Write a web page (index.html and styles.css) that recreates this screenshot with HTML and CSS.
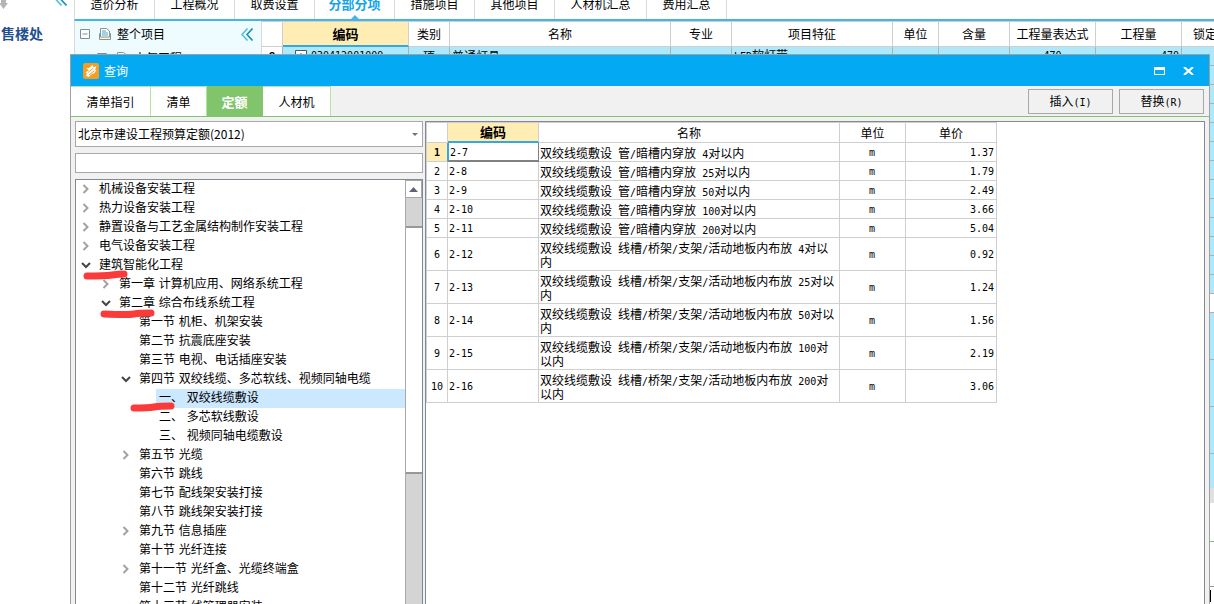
FILE: index.html
```html
<!DOCTYPE html>
<html lang="zh-CN">
<head>
<meta charset="utf-8">
<title>查询</title>
<link rel="stylesheet" href="styles.css">
</head>
<body>
<svg class="defs" aria-hidden="true">
  <symbol id="more" viewBox="0 0 10 10"><path d="M2.500 1L6.500 5L2.500 9" fill="none" stroke="#a2a2a2" stroke-width="2"/></symbol>
  <symbol id="open" viewBox="0 0 10 10"><path d="M1 3L5 7L9 3" fill="none" stroke="#454545" stroke-width="2"/></symbol>
  <symbol id="back" viewBox="0 0 12 13"><path d="M6.500 .5L1 6.500L6.500 12.500" fill="none" stroke="#4fc0d8" stroke-width="1.600"/><path d="M11.500 .5L6 6.500L11.500 12.500" fill="none" stroke="#1593b8" stroke-width="1.600"/></symbol>
</svg>

<div class="app">
  <aside class="project">
    <div class="project-top">
      <svg width="12" height="9" viewBox="0 0 12 9"><path d="M0 3h1V0h5v3h2L3.500 9L-1 3z" fill="#b5b5b5"/></svg>
      <svg width="12" height="13"><use href="#back"/></svg>
    </div>
    <div class="project-name">售楼处</div>
  </aside>
  <main class="work">
    <nav class="app-tabs">
      <button>造价分析</button><button>工程概况</button><button>取费设置</button><button class="on">分部分项</button><button>措施项目</button><button>其他项目</button><button class="wide">人材机汇总</button><button>费用汇总</button>
    </nav>
    <div class="split">
      <section class="outline">
        <div class="outline-row">
          <svg width="10" height="10"><path d="M.5.5h9v9h-9zM2.500 5h5" fill="#fff" stroke="#7d8f98"/></svg>
          <svg width="12" height="12"><path d="M.5 5.500h11v6H.5z" fill="#fbf3cf" stroke="#85949a"/><path d="M1.500.5h6l3 2.500v6h-9z" fill="#fff" stroke="#85949a"/><path d="M3 3h4M3 5h6M3 7h6" stroke="#4da6c8"/></svg>
          <span>整个项目</span>
          <svg class="fold" width="12" height="13"><use href="#back"/></svg>
        </div>
        <div class="outline-row child">
          <svg width="10" height="10"><path d="M.5.5h9v9h-9zM2.500 5h5" fill="#fff" stroke="#7d8f98"/></svg>
          <svg width="12" height="12"><path d="M1.500.5h6l3 2.500v8h-9z" fill="#fff" stroke="#85949a"/></svg>
          <span>电气工程</span>
        </div>
      </section>
      <div class="sheet">
        <table class="items">
          <colgroup><col class="w21"><col class="w126"><col class="w41"><col class="w221"><col class="w61"><col class="w161"><col class="w46"><col class="w71"><col class="w86"><col class="w86"><col class="w71"></colgroup>
          <thead><tr><th></th><th class="hot">编码</th><th>类别</th><th>名称</th><th>专业</th><th>项目特征</th><th>单位</th><th>含量</th><th>工程量表达式</th><th>工程量</th><th>锁定综合</th></tr></thead>
          <tbody>
            <tr><td class="no">8</td><td><span class="code"><svg width="12" height="12"><path d="M.5.5h11v11H.5zM3 6h6M6 3v6" fill="#fff" stroke="#555"/></svg><span class="num">030412001009</span></span></td><td class="mid">项</td><td>普通灯具</td><td></td><td><span class="num">LED</span>软灯带</td><td></td><td></td><td class="mid num">470</td><td class="end num">470</td><td></td></tr>
            <tr><td colspan="11"></td></tr><tr><td colspan="11"></td></tr><tr><td colspan="11"></td></tr><tr><td colspan="11"></td></tr><tr><td colspan="11"></td></tr><tr><td colspan="11"></td></tr><tr><td colspan="11"></td></tr><tr><td colspan="11"></td></tr><tr><td colspan="11"></td></tr><tr><td colspan="11"></td></tr><tr><td colspan="11"></td></tr><tr><td colspan="11"></td></tr>
            <tr class="plain"><td colspan="11"></td></tr>
            <tr class="tall"><td colspan="11"></td></tr><tr class="tall"><td colspan="11"></td></tr><tr class="tall"><td colspan="11"></td></tr>
            <tr class="last"><td colspan="11"></td></tr>
          </tbody>
        </table>
        <div class="hscroll"></div>
        <div class="detail"><div class="detail-tabs"></div><div class="detail-head"></div><div class="caret"></div></div>
      </div>
    </div>
  </main>
</div>

<div class="dialog" role="dialog" aria-labelledby="dialog-title">
  <header class="title">
    <svg width="16" height="16" viewBox="0 0 16 16"><rect width="16" height="16" rx="2" fill="#f99d1c"/><path d="M3 5.500L6 5L9.500 2L10.500 4L13.500 3.500L12 6.500L13.500 7L11.500 10L8 11.500L6 14L3 13L4 10.500L2.500 9.500L6 7z" fill="#fff"/><path d="M5 9.500L10.500 5M6 12L11 8" stroke="#f99d1c" fill="none"/></svg>
    <h1 id="dialog-title">查询</h1>
    <button aria-label="最大化"><svg width="11" height="8"><path d="M.5 1h10v6.500H.5z" fill="none" stroke="#fff"/><path d="M0 0h11v3H0z" fill="#fff"/></svg></button>
    <button aria-label="关闭"><svg width="11" height="8"><path d="M1 0L10 8M10 0L1 8" stroke="#fff" stroke-width="2.200"/></svg></button>
  </header>
  <div class="bar">
    <nav class="tabs"><button class="t4">清单指引</button><button>清单</button><button class="on">定额</button><button class="t3">人材机</button></nav>
    <div class="actions"><button>插入<span class="key">(I)</span></button><button>替换<span class="key">(R)</span></button></div>
  </div>
  <div class="body">
    <div class="left">
      <div class="pick">
        <select aria-label="定额库"><option>北京市建设工程预算定额(2012)</option></select>
        <svg width="6" height="3"><path d="M0 0h6L3 3z" fill="#6b7280"/></svg>
      </div>
      <input class="find" type="text" aria-label="查找">
      <div class="tree">
        <ul>
          <li><button aria-label="展开"><svg><use href="#more"/></svg></button><span>机械设备安装工程</span></li>
          <li><button aria-label="展开"><svg><use href="#more"/></svg></button><span>热力设备安装工程</span></li>
          <li><button aria-label="展开"><svg><use href="#more"/></svg></button><span>静置设备与工艺金属结构制作安装工程</span></li>
          <li><button aria-label="展开"><svg><use href="#more"/></svg></button><span>电气设备安装工程</span></li>
          <li><button aria-label="收起"><svg><use href="#open"/></svg></button><span>建筑智能化工程</span><svg class="mark m1" viewBox="0 0 56 10"><path d="M4 6Q22 6 29 5T41 4" /></svg></li>
          <li class="l1"><button aria-label="展开"><svg><use href="#more"/></svg></button><span>第一章 计算机应用、网络系统工程</span></li>
          <li class="l1"><button aria-label="收起"><svg><use href="#open"/></svg></button><span>第二章 综合布线系统工程</span><svg class="mark m2" viewBox="0 0 56 10"><path d="M4 5Q28 6 34 5T51 4"/></svg></li>
          <li class="l2"><span>第一节 机柜、机架安装</span></li>
          <li class="l2"><span>第二节 抗震底座安装</span></li>
          <li class="l2"><span>第三节 电视、电话插座安装</span></li>
          <li class="l2"><button aria-label="收起"><svg><use href="#open"/></svg></button><span>第四节 双绞线缆、多芯软线、视频同轴电缆</span></li>
          <li class="l3 sel"><span>一、 双绞线缆敷设</span><svg class="mark m3" viewBox="0 0 56 10"><path d="M4 6Q18 6 24 5T41 4"/></svg></li>
          <li class="l3"><span>二、 多芯软线敷设</span></li>
          <li class="l3"><span>三、 视频同轴电缆敷设</span></li>
          <li class="l2"><button aria-label="展开"><svg><use href="#more"/></svg></button><span>第五节 光缆</span></li>
          <li class="l2"><span>第六节 跳线</span></li>
          <li class="l2"><span>第七节 配线架安装打接</span></li>
          <li class="l2"><span>第八节 跳线架安装打接</span></li>
          <li class="l2"><button aria-label="展开"><svg><use href="#more"/></svg></button><span>第九节 信息插座</span></li>
          <li class="l2"><span>第十节 光纤连接</span></li>
          <li class="l2"><button aria-label="展开"><svg><use href="#more"/></svg></button><span>第十一节 光纤盒、光缆终端盒</span></li>
          <li class="l2"><span>第十二节 光纤跳线</span></li>
          <li class="l2"><span>第十三节 线管理器安装</span></li>
        </ul>
        <div class="scroll">
          <button aria-label="向上"><svg width="9" height="5"><path d="M4.500 0L9 5H0z" fill="#5f6478"/></svg></button>
          <div class="thumb"></div>
        </div>
      </div>
    </div>
    <div class="results">
      <table class="quota">
        <colgroup><col class="q21"><col class="q91"><col class="q301"><col class="q66"><col class="q91"></colgroup>
        <thead><tr><th></th><th class="hot">编码</th><th>名称</th><th>单位</th><th>单价</th></tr></thead>
        <tbody>
          <tr><td class="cur">1</td><td class="focus">2-7</td><td>双绞线缆敷设<i> </i>管<i>/</i>暗槽内穿放<i> 4</i>对以内</td><td>m</td><td>1.37</td></tr>
          <tr><td>2</td><td>2-8</td><td>双绞线缆敷设<i> </i>管<i>/</i>暗槽内穿放<i> 25</i>对以内</td><td>m</td><td>1.79</td></tr>
          <tr><td>3</td><td>2-9</td><td>双绞线缆敷设<i> </i>管<i>/</i>暗槽内穿放<i> 50</i>对以内</td><td>m</td><td>2.49</td></tr>
          <tr><td>4</td><td>2-10</td><td>双绞线缆敷设<i> </i>管<i>/</i>暗槽内穿放<i> 100</i>对以内</td><td>m</td><td>3.66</td></tr>
          <tr><td>5</td><td>2-11</td><td>双绞线缆敷设<i> </i>管<i>/</i>暗槽内穿放<i> 200</i>对以内</td><td>m</td><td>5.04</td></tr>
          <tr class="two"><td>6</td><td>2-12</td><td>双绞线缆敷设<i> </i>线槽<i>/</i>桥架<i>/</i>支架<i>/</i>活动地板内布放<i> 4</i>对以<br>内</td><td>m</td><td>0.92</td></tr>
          <tr class="two"><td>7</td><td>2-13</td><td>双绞线缆敷设<i> </i>线槽<i>/</i>桥架<i>/</i>支架<i>/</i>活动地板内布放<i> 25</i>对以<br>内</td><td>m</td><td>1.24</td></tr>
          <tr class="two"><td>8</td><td>2-14</td><td>双绞线缆敷设<i> </i>线槽<i>/</i>桥架<i>/</i>支架<i>/</i>活动地板内布放<i> 50</i>对以<br>内</td><td>m</td><td>1.56</td></tr>
          <tr class="two"><td>9</td><td>2-15</td><td>双绞线缆敷设<i> </i>线槽<i>/</i>桥架<i>/</i>支架<i>/</i>活动地板内布放<i> 100</i>对<br>以内</td><td>m</td><td>2.19</td></tr>
          <tr class="two"><td>10</td><td>2-16</td><td>双绞线缆敷设<i> </i>线槽<i>/</i>桥架<i>/</i>支架<i>/</i>活动地板内布放<i> 200</i>对<br>以内</td><td>m</td><td>3.06</td></tr>
        </tbody>
      </table>
    </div>
  </div>
</div>
</body>
</html>
```
FILE: styles.css
```css
* { box-sizing: border-box; }
html, body { height: 100%; }
body {
  margin: 0;
  overflow: hidden;
  position: relative;
  background: #fff;
  color: #000;
  font: 12px/14px "Noto Sans CJK SC", sans-serif;
}
button {
  margin: 0;
  padding: 0;
  border: 0;
  background: none;
  color: inherit;
  font: inherit;
  white-space: nowrap;
}
svg { display: block; flex: none; }
table { border-collapse: separate; border-spacing: 0; table-layout: fixed; }
th { font-weight: normal; }
.defs { position: absolute; width: 0; height: 0; }
.num, .key, i { font-family: "DejaVu Sans Mono", monospace; font-size: 10px; font-style: normal; }
i { line-height: 1px; }

/* main window */
.app { display: flex; height: 100%; overflow: hidden; }
.project { flex: none; width: 74px; }
.project-top { display: flex; justify-content: space-between; height: 9px; padding-right: 7px; align-items: flex-end; overflow: hidden; }
.project-top svg:last-child { margin-bottom: 3px; }
.project-name { padding: 17px 0 0 1px; color: #1f4f8f; font-size: 14px; font-weight: bold; }
.work { flex: 1; min-width: 0; }
.app-tabs { display: flex; align-items: flex-end; height: 21px; overflow: hidden; border-bottom: 2px solid #45b5e6; border-left: 1px solid #d9d9d9; }
.app-tabs button { flex: none; width: 80px; height: 30px; border-right: 1px solid #d9d9d9; }
.app-tabs .wide { width: 92px; }
.app-tabs .on { position: relative; color: #12a5ea; font-size: 13px; font-weight: bold; }
.app-tabs .on::after {
  content: "";
  position: absolute;
  left: 36px;
  bottom: 0;
  border: 4px solid transparent;
  border-top: 0;
  border-bottom-color: #45b5e6;
}
.split { display: flex; }
.outline { flex: none; width: 188px; height: 600px; border-left: 1px solid #d9d9d9; border-right: 1px solid #d9d9d9; background: #effcff; }
.outline-row { display: flex; align-items: center; gap: 6px; height: 22px; margin-top: 2px; padding-left: 5px; }
.outline-row svg:nth-child(2) { margin-left: 3px; }
.outline .fold { margin-left: auto; margin-right: 8px; }
.child { padding-left: 22px; }
.sheet { flex: 1; min-width: 0; overflow: hidden; }
.items { width: 991px; background: #ade8fb; }
.items th { height: 26px; padding: 0; background: #fff; border: 0 solid #cfcfcf; border-width: 1px 1px 1px 0; }
.items th.hot { background: #ffedb3; border-bottom: 2px solid #35a8dc; font-size: 13px; font-weight: bold; }
.items td { height: 19px; padding: 0 2px; border: 0 solid #b0b0b0; border-width: 0 1px 1px 0; line-height: 14px; }
.items .no { background: #fff; text-align: center; font-weight: bold; }
.items .mid { text-align: center; }
.items .end { text-align: right; }
.code { display: flex; align-items: center; gap: 4px; padding-left: 10px; }
.items .plain td { background: #fff; }
.items .tall td { height: 47px; }
.items .last td { height: 34px; border-bottom: 0; }
.w21 { width: 21px; } .w126 { width: 126px; } .w41 { width: 41px; } .w221 { width: 221px; }
.w61 { width: 61px; } .w161 { width: 161px; } .w46 { width: 46px; } .w71 { width: 71px; } .w86 { width: 86px; }
.hscroll { height: 15px; background: #e0e0e0; }
.detail-tabs { height: 39px; border-bottom: 1px solid #80c46c; }
.detail-head { height: 45px; border-bottom: 1px solid #9c9c9c; }
.caret { width: 18px; height: 12px; margin: 3px 0 0 931px; border-right: 1px solid #000; }

/* query dialog */
.dialog {
  position: absolute;
  top: 54px;
  right: 4px;
  bottom: 0;
  left: 70px;
  display: flex;
  flex-direction: column;
  overflow: hidden;
  border: 1px solid #a0a0a0;
  border-bottom: 0;
  background: #f1f1f1;
}
.title { flex: none; display: flex; align-items: center; height: 31px; padding: 0 15px 0 12px; background: #03a9f3; color: #fff; }
.title h1 { flex: 1; margin: 0 0 0 5px; font-size: 12px; font-weight: normal; }
.title button { margin-left: 18px; }
.bar { flex: none; display: flex; justify-content: space-between; height: 31px; border-bottom: 1px solid #80c46c; }
.tabs { display: flex; }
.tabs button { width: 56px; padding-top: 1px; border: 0 solid #b4e4a2; border-width: 1px 1px 0 0; background: #fff; }
.tabs .t4 { width: 80px; }
.tabs .t3 { width: 68px; }
.tabs .on { background: #80c46c; border-color: #80c46c; color: #fff; font-size: 13px; font-weight: bold; }
.actions { display: flex; gap: 6px; padding: 3px 5px 2px 0; }
.actions button { width: 85px; border: 1px solid #a8a8a8; }
.body { flex: 1; display: flex; gap: 2px; min-height: 0; padding: 4px 4px 0; }
.left { flex: none; display: flex; flex-direction: column; gap: 6px; width: 348px; }
.pick { position: relative; flex: none; height: 26px; }
.pick select {
  width: 100%;
  height: 100%;
  padding: 0 2px;
  appearance: none;
  border: 1px solid #a8a8a8;
  border-radius: 0;
  background: #fff;
  color: #000;
  font: inherit;
}
.pick svg { position: absolute; top: 12px; right: 5px; pointer-events: none; }
.find { flex: none; height: 20px; padding: 0 2px; border: 1px solid #a8a8a8; border-radius: 0; background: #fff; font: inherit; }
.tree { flex: 1; display: flex; min-height: 0; border: 1px solid #838993; border-bottom: 0; background: #fff; }
.tree ul { flex: 1; margin: 0; padding: 0; list-style: none; font-family: "DejaVu Sans", "Noto Sans CJK SC", sans-serif; }
.tree li { position: relative; display: flex; height: 19px; line-height: 19px; padding-left: 20px; white-space: nowrap; }
.tree li > span { flex: 1; padding-left: 3px; }
.tree li button { display: flex; align-items: center; justify-content: center; width: 20px; height: 18px; margin-left: -20px; }
.tree li button svg { width: 10px; height: 10px; }
.tree .l1 { padding-left: 40px; }
.tree .l2 { padding-left: 60px; }
.tree .l3 { padding-left: 80px; }
.tree .sel > span { background: #cce8ff; }
.mark { position: absolute; z-index: 1; width: 56px; height: 10px; fill: none; stroke: #fb3a3a; stroke-width: 7; stroke-linecap: round; }
.m1 { left: 7px; top: 14px; }
.m2 { left: 24px; top: 15px; }
.m3 { left: 54px; top: 13px; }
.scroll { flex: none; width: 17px; border-left: 1px solid #a8a8a8; background: #d4d4d4; }
.scroll button { display: flex; align-items: center; justify-content: center; width: 16px; height: 18px; border: 1px solid #a8a8a8; border-left: 0; background: #fff; }
.scroll .thumb { height: 248px; margin-top: 28px; border: 0 solid #989898; border-width: 2px 0; background: #fff; }
.results { flex: 1; min-width: 0; overflow: hidden; border: 1px solid #838993; border-bottom: 0; background: #fff; }
.quota { width: 571px; border: 0 solid #cfcfcf; border-width: 1px 0 0 1px; }
.quota th { height: 20px; padding: 0; border: 0 solid #cfcfcf; border-width: 0 1px 1px 0; }
.quota .hot { background: #ffedb3; border-bottom: 2px solid #35a8dc; font-size: 13px; font-weight: bold; }
.quota td { height: 19px; padding: 2px 2px 0 1px; border: 0 solid #cfcfcf; border-width: 0 1px 1px 0; font-family: "DejaVu Sans Mono", monospace; font-size: 10px; line-height: 14px; white-space: nowrap; }
.quota td:nth-child(1) { padding: 2px 0 0; text-align: center; }
.quota td:nth-child(3) { font-family: "Noto Sans CJK SC", sans-serif; font-size: 12px; }
.quota td:nth-child(4) { text-align: center; }
.quota td:nth-child(5) { text-align: right; }
.quota .two td { height: 33px; }
.quota .cur { background: #ffedb3; border-right: 1px solid #35a8dc; font-weight: bold; }
.quota .focus { border-right: 1px solid #808080; border-bottom: 2px solid #808080; border-left: 1px solid #35a8dc; }
.q21 { width: 21px; } .q91 { width: 91px; } .q301 { width: 301px; } .q66 { width: 66px; }
```
